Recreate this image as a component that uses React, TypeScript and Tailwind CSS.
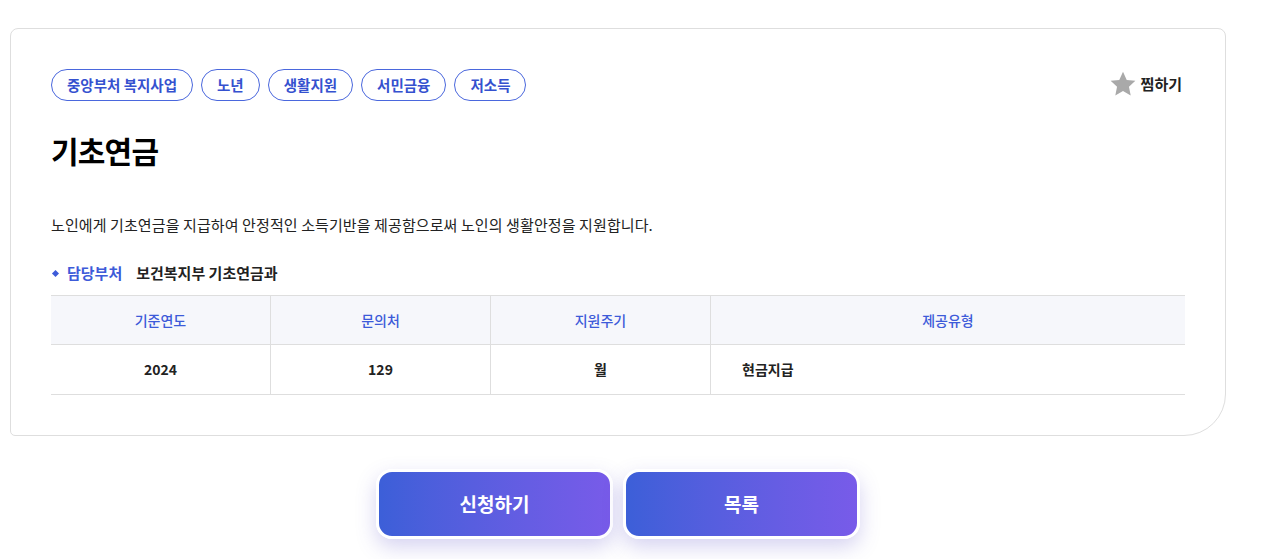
import React from "react";

const tags = ["중앙부처 복지사업", "노년", "생활지원", "서민금융", "저소득"];

const columns = [
    { label: "기준연도", value: "2024", align: "center" },
    { label: "문의처", value: "129", align: "center" },
    { label: "지원주기", value: "월", align: "center" },
    { label: "제공유형", value: "현금지급", align: "left" },
];

function StarIcon() {
    return (
        <svg width="28" height="28" viewBox="0 0 24 24" fill="#a9a9a9">
            <path d="M12 1.6l3.2 6.9 7.4.8-5.5 5.1 1.5 7.4L12 18.1l-6.6 3.7 1.5-7.4-5.5-5.1 7.4-.8z" />
        </svg>
    );
}

export default function App() {
    return (
        <div className="w-[1269px] h-[559px] bg-white pt-[28px] pl-[10px]" style={{ fontFamily: '"Noto Sans CJK KR", "Noto Sans", sans-serif' }}>
            <div className="w-[1216px] border border-[#dedede] rounded-t-[8px] rounded-bl-[5px] rounded-br-[42px] px-[40px] pt-[40px] pb-[40px] bg-white">
                <div className="flex items-start justify-between">
                    <div className="flex gap-[8px]">
                        {tags.map((t) => (
                            <span key={t} className="h-[32px] px-[15px] flex items-center rounded-full border border-[#4a67dd] text-[#3551cf] text-[14.5px] font-semibold leading-none">
                                {t}
                            </span>
                        ))}
                    </div>
                    <button className="flex items-center gap-[4px] mt-[1px] mr-[3px] text-[#222] text-[15px] font-bold">
                        <StarIcon />
                        찜하기
                    </button>
                </div>

                <h1 className="mt-[31px] text-[30px] leading-[36px] font-bold text-black tracking-[-0.8px]">기초연금</h1>

                <p className="mt-[46px] text-[15px] leading-[22px] text-[#222] tracking-[0.1px]">
                    노인에게 기초연금을 지급하여 안정적인 소득기반을 제공함으로써 노인의 생활안정을 지원합니다.
                </p>

                <div className="mt-[26px] flex items-center text-[15px] leading-[22px] font-bold">
                    <span className="w-[5px] h-[5px] bg-[#3d5bd9] rotate-45 ml-[2px] mr-[9px]" />
                    <span className="text-[#3d5bd9]">담당부처</span>
                    <span className="ml-[14px] text-[#222]">보건복지부 기초연금과</span>
                </div>

                <div className="mt-[11px] border-t border-b border-[#dedede]">
                    <div className="grid grid-cols-[219px_220px_220px_1fr] bg-[#f6f7fb] border-b border-[#dedede] h-[49px]">
                        {columns.map((c, i) => (
                            <div key={c.label} className={`flex items-center justify-center text-[14px] font-medium text-[#3d5bd9] ${i > 0 ? "border-l border-[#dedede]" : ""}`}>
                                {c.label}
                            </div>
                        ))}
                    </div>
                    <div className="grid grid-cols-[219px_220px_220px_1fr] h-[49px]">
                        {columns.map((c, i) => (
                            <div key={c.label} className={`flex items-center text-[14px] font-bold text-[#222] ${c.align === "center" ? "justify-center" : "pl-[31px]"} ${i > 0 ? "border-l border-[#dedede]" : ""}`}>
                                {c.value}
                            </div>
                        ))}
                    </div>
                </div>
            </div>

            <div className="w-[1216px] flex justify-center gap-[10px] mt-[33px]">
                {["신청하기", "목록"].map((b) => (
                    <button key={b} className="w-[237px] h-[70px] rounded-[16px] border-[3px] border-white bg-gradient-to-r from-[#3c5fd8] to-[#785be9] text-white text-[19px] font-bold shadow-[0_8px_20px_rgba(90,80,200,0.25)]">
                        {b}
                    </button>
                ))}
            </div>
        </div>
    );
}
